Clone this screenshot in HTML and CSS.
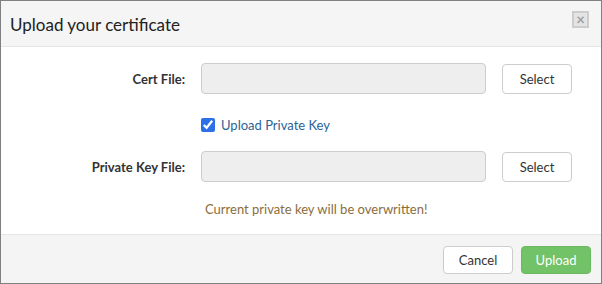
FILE: index.html
```html
<!DOCTYPE html>
<html>

<head>
    <title>Upload your certificate</title>
    <link rel="stylesheet" href="styles.css">
</head>

<body>
    <div class="dialog">
        <div class="dialog-header">
            <span class="dialog-title">Upload your certificate</span>
            <span class="close-btn"><span class="close-x">&#215;</span></span>
        </div>
        <div class="dialog-body">
            <div class="form-row">
                <label class="form-label">Cert File:</label>
                <input type="text" class="file-input" disabled>
                <button class="btn">Select</button>
            </div>
            <div class="form-row check-row">
                <span></span>
                <label class="check-label"><input type="checkbox" checked> Upload Private Key</label>
            </div>
            <div class="form-row">
                <label class="form-label">Private Key File:</label>
                <input type="text" class="file-input" disabled>
                <button class="btn">Select</button>
            </div>
            <div class="form-row warn-row">
                <span></span>
                <span class="warning">Current private key will be overwritten!</span>
            </div>
        </div>
        <div class="dialog-footer">
            <button class="btn">Cancel</button>
            <button class="btn btn-success">Upload</button>
        </div>
    </div>
</body>

</html>
```

FILE: styles.css
```css
body {
    margin: 0;
    font-family: Lato, "Open Sans", sans-serif;
    color: #333;
}

.dialog {
    width: 600px;
    height: 282px;
    border: 1px solid #808080;
    display: flex;
    flex-direction: column;
    background-color: #fff;
}

.dialog-header {
    height: 45px;
    background-color: #f5f5f5;
    border-bottom: 1px solid #e5e5e5;
    display: flex;
    align-items: center;
    justify-content: space-between;
    padding: 0 12px 0 9px;
}

.dialog-title {
    font-size: 17px;
    margin-top: 2px;
    color: #222;
}

.close-btn {
    width: 13px;
    height: 13px;
    border: 2px solid #cdcdcd;
    background-color: #e4e4e4;
    display: flex;
    align-items: center;
    justify-content: center;
    margin-top: -9px;
}

.close-x {
    font-size: 15px;
    font-weight: bold;
    line-height: 13px;
    color: #a0a0a0;
}

.dialog-body {
    flex: 1;
    padding-top: 16px;
}

.form-row {
    display: grid;
    grid-template-columns: 184px 285px 70px;
    column-gap: 16px;
    align-items: center;
}

.form-label {
    text-align: right;
    font-weight: bold;
    font-size: 13px;
}

.file-input {
    height: 31px;
    box-sizing: border-box;
    border: 1px solid #ccc;
    border-radius: 4px;
    background-color: #eee;
    margin: 0;
}

.check-row {
    margin: 23px 0 18px;
}

.check-label {
    font-size: 13px;
    color: #2a6496;
    display: flex;
    align-items: center;
    gap: 6px;
}

.check-label input {
    margin: 0;
    width: 14px;
    height: 14px;
    accent-color: #2c6fe6;
}

.warn-row {
    margin-top: 19px;
}

.warning {
    color: #8a6d3b;
    font-size: 13px;
    padding-left: 4px;
}

.btn {
    height: 30px;
    box-sizing: border-box;
    border: 1px solid #ccc;
    border-radius: 4px;
    background-color: #fff;
    color: #333;
    font-family: Lato, "Open Sans", sans-serif;
    font-size: 13px;
    padding: 0;
    width: 70px;
}

.dialog-footer {
    height: 48px;
    background-color: #f4f4f4;
    border-top: 1px solid #e5e5e5;
    display: flex;
    justify-content: flex-end;
    align-items: center;
    gap: 8px;
    padding: 0 10px 0 0;
}

.dialog-footer .btn {
    height: 28px;
    width: 70px;
    margin-top: 1px;
}

.btn-success {
    background-color: #72c267;
    border-color: #68b85d;
    color: #fff;
}
```
